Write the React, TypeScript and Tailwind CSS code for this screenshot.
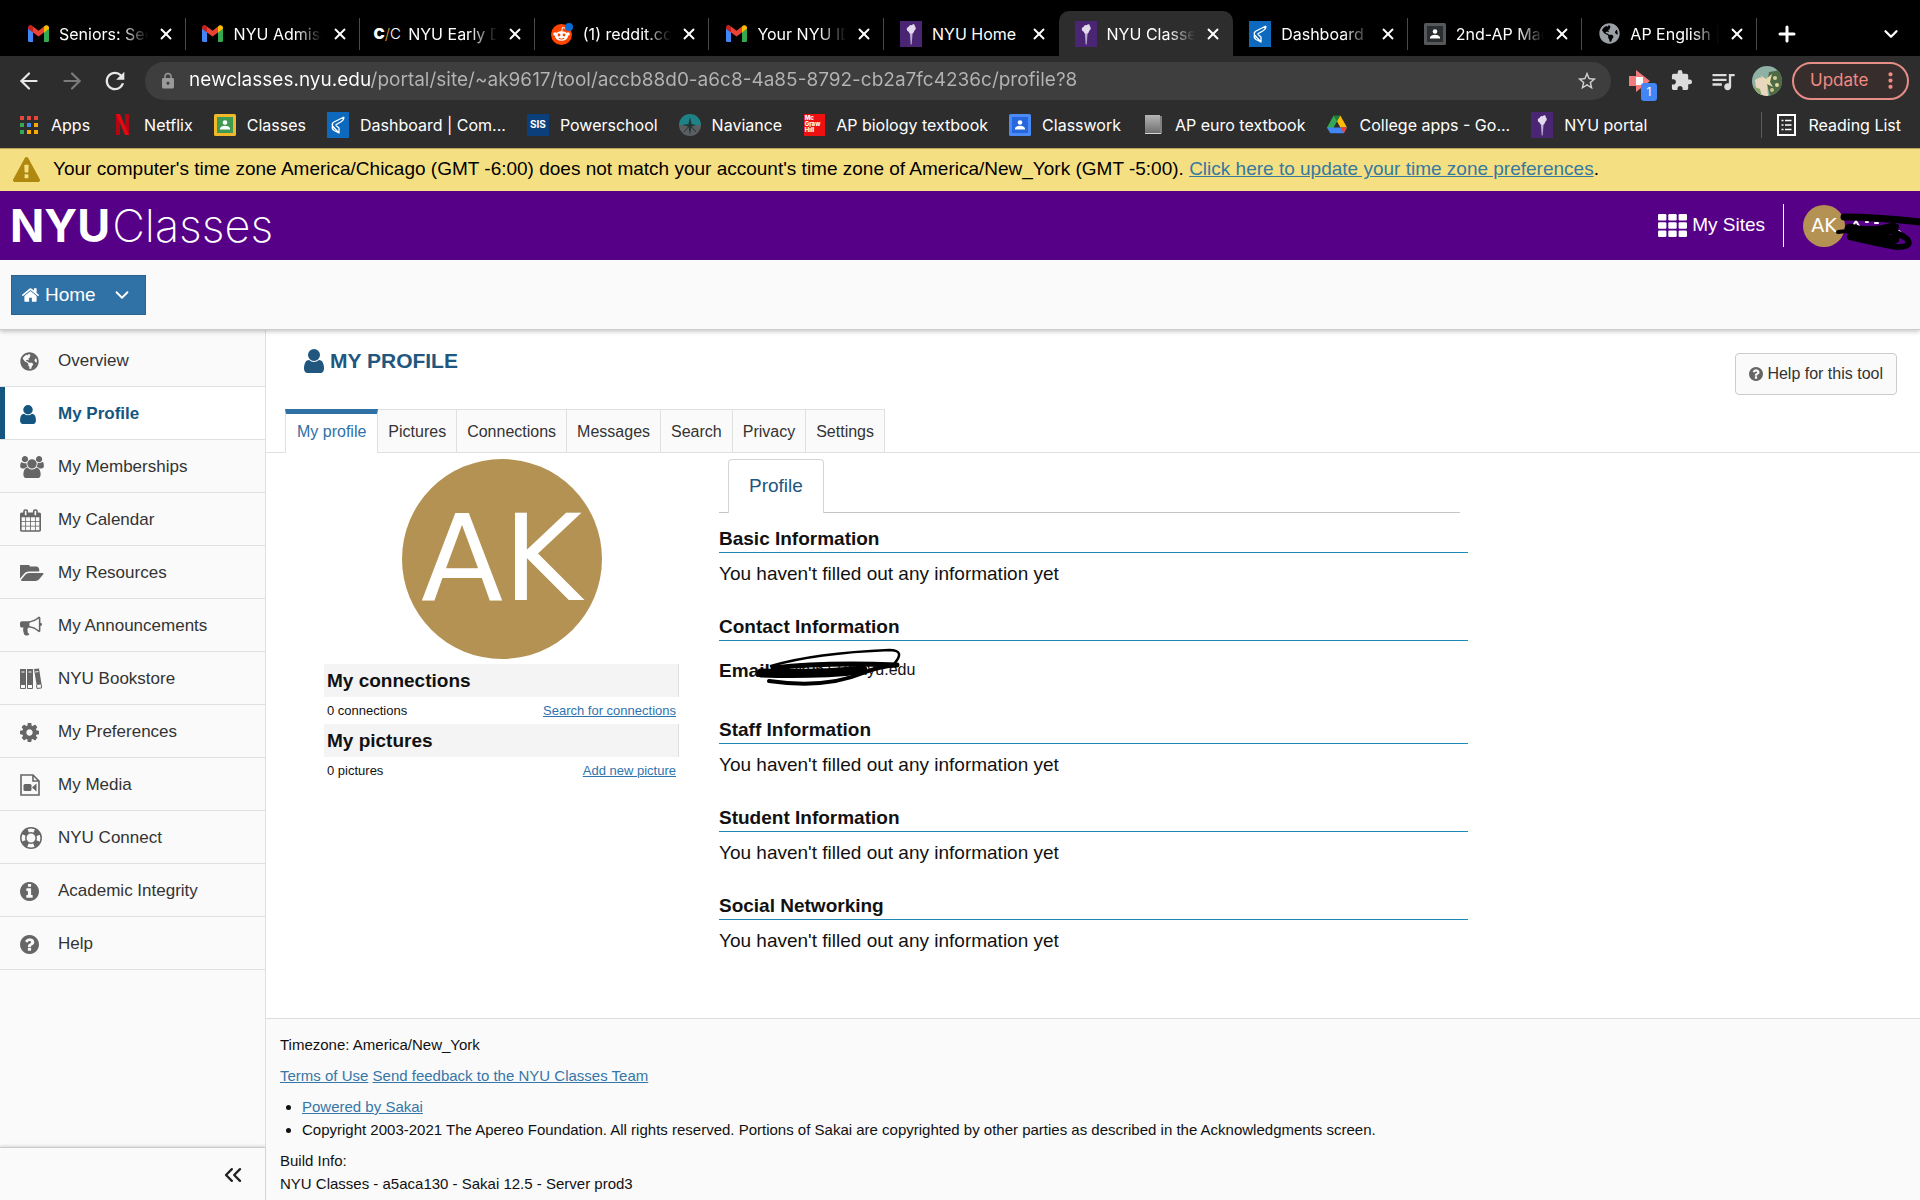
// src/App.tsx
import React from 'react';
import { ArrowLeft, ArrowRight, ChevronDown, ChevronsLeft, Plus, X } from 'lucide-react';
import { FaGlobeAmericas } from 'react-icons/fa';
import { MdExtension, MdLock, MdMoreVert, MdQueueMusic, MdRefresh, MdStarBorder } from 'react-icons/md';

interface IconProps {
  className?: string;
}

const DISC =
  'm640 -480q0 209-103 385.5t-279.5 279.5-385.5 103-385.5-103-279.5-279.5-103-385.5 103-385.5 279.5-279.5 385.5-103 385.5 103 279.5 279.5 103 385.5z';

const glyphs = {
  user: 'M1536 1399q0 109-62.5 187t-150.5 78h-854q-88 0-150.5-78t-62.5-187q0-85 8.5-160.5t31.5-152 58.5-131 94-89 134.5-34.5q131 128 313 128t313-128q76 0 134.5 34.5t94 89 58.5 131 31.5 152 8.5 160.5zm-256-887q0 159-112.5 271.5t-271.5 112.5-271.5-112.5-112.5-271.5 112.5-271.5 271.5-112.5 271.5 112.5 112.5 271.5z',
  users: 'M593 896q-162 5-265 128h-134q-82 0-138-40.5t-56-118.5q0-353 124-353 6 0 43.5 21t97.5 42.5 119 21.5q67 0 133-23-5 37-5 66 0 159 90 287zm1071 637q0 120-73 189.5t-194 69.5h-874q-121 0-194-69.5t-73-189.5q0-53 3.5-103.5t14-109 26.5-108.5 43-97.5 62-81 85.5-53.5 111.5-20q10 0 43 21.5t73 48 107 48 135 21.5 135-21.5 107-48 73-48 43-21.5q61 0 111.5 20t85.5 53.5 62 81 43 97.5 26.5 108.5 14 109 3.5 103.5zm-1024-1277q0 106-75 181t-181 75-181-75-75-181 75-181 181-75 181 75 75 181zm704 384q0 159-112.5 271.5t-271.5 112.5-271.5-112.5-112.5-271.5 112.5-271.5 271.5-112.5 271.5 112.5 112.5 271.5zm576 225q0 78-56 118.5t-138 40.5h-134q-103-123-265-128 90-128 90-287 0-29-5-66 66 23 133 23 59 0 119-21.5t97.5-42.5 43.5-21q124 0 124 353zm-128-609q0 106-75 181t-181 75-181-75-75-181 75-181 181-75 181 75 75 181z',
  calendar: 'M192 1664h288v-288h-288v288zm352 0h320v-288h-320v288zm-352-352h288v-320h-288v320zm352 0h320v-320h-320v320zm-352-384h288v-288h-288v288zm736 736h320v-288h-320v288zm-384-736h320v-288h-320v288zm768 736h288v-288h-288v288zm-384-352h320v-320h-320v320zm-352-864v-288q0-13-9.5-22.5t-22.5-9.5h-64q-13 0-22.5 9.5t-9.5 22.5v288q0 13 9.5 22.5t22.5 9.5h64q13 0 22.5-9.5t9.5-22.5zm736 864h288v-320h-288v320zm-384-384h320v-288h-320v288zm384 0h288v-288h-288v288zm32-480v-288q0-13-9.5-22.5t-22.5-9.5h-64q-13 0-22.5 9.5t-9.5 22.5v288q0 13 9.5 22.5t22.5 9.5h64q13 0 22.5-9.5t9.5-22.5zm384-64v1280q0 52-38 90t-90 38h-1408q-52 0-90-38t-38-90v-1280q0-52 38-90t90-38h128v-96q0-66 47-113t113-47h64q66 0 113 47t47 113v96h384v-96q0-66 47-113t113-47h64q66 0 113 47t47 113v96h128q52 0 90 38t38 90z',
  folder: 'M1879 952q0 31-31 66l-336 396q-43 51-120.5 86.5t-143.5 35.5h-1088q-34 0-60.5-13t-26.5-43q0-31 31-66l336-396q43-51 120.5-86.5t143.5-35.5h1088q34 0 60.5 13t26.5 43zm-343-344v160h-832q-94 0-197 47.5t-164 119.5l-337 396-5 6q0-4-.5-12.5t-.5-12.5v-960q0-92 66-158t158-66h320q92 0 158 66t66 158v32h544q92 0 158 66t66 158z',
  bullhorn: 'M1664 640q53 0 90.5 37.5t37.5 90.5-37.5 90.5-90.5 37.5v384q0 52-38 90t-90 38q-417-347-812-380-58 19-91 66t-31 100.5 40 92.5q-20 33-23 65.5t6 58 33.5 55 48 50 61.5 50.5q-29 58-111.5 83t-168.5 11.5-132-55.5q-7-23-29.5-87.5t-32-94.5-23-89-15-101 3.5-98.5 22-110.5h-122q-66 0-113-47t-47-113v-192q0-66 47-113t113-47h480q435 0 896-384 52 0 90 38t38 90v384zm-128 604v-954q-394 302-768 343v270q377 42 768 341z',
  cog: 'M1152 896q0-106-75-181t-181-75-181 75-75 181 75 181 181 75 181-75 75-181zm512-109v222q0 12-8 23t-20 13l-185 28q-19 54-39 91 35 50 107 138 10 12 10 25t-9 23q-27 37-99 108t-94 71q-12 0-26-9l-138-108q-44 23-91 38-16 136-29 186-7 28-36 28h-222q-14 0-24.5-8.5t-11.5-21.5l-28-184q-49-16-90-37l-141 107q-10 9-25 9-14 0-25-11-126-114-165-168-7-10-7-23 0-12 8-23 15-21 51-66.5t54-70.5q-27-50-41-99l-183-27q-13-2-21-12.5t-8-23.5v-222q0-12 8-23t19-13l186-28q14-46 39-92-40-57-107-138-10-12-10-24 0-10 9-23 26-36 98.5-107.5t94.5-71.5q13 0 26 10l138 107q44-23 91-38 16-136 29-186 7-28 36-28h222q14 0 24.5 8.5t11.5 21.5l28 184q49 16 90 37l142-107q9-9 24-9 13 0 25 10 129 119 165 170 7 8 7 22 0 12-8 23-15 21-51 66.5t-54 70.5q26 50 41 98l183 28q13 2 21 12.5t8 23.5z',
  info: 'M1152 1376v-160q0-14-9-23t-23-9h-96v-512q0-14-9-23t-23-9h-320q-14 0-23 9t-9 23v160q0 14 9 23t23 9h96v320h-96q-14 0-23 9t-9 23v160q0 14 9 23t23 9h448q14 0 23-9t9-23zm-128-896v-160q0-14-9-23t-23-9h-192q-14 0-23 9t-9 23v160q0 14 9 23t23 9h192q14 0 23-9t9-23zm640 416q0 209-103 385.5t-279.5 279.5-385.5 103-385.5-103-279.5-279.5-103-385.5 103-385.5 279.5-279.5 385.5-103 385.5 103 279.5 279.5 103 385.5z',
  question: 'M1024 1376v-192q0-14-9-23t-23-9h-192q-14 0-23 9t-9 23v192q0 14 9 23t23 9h192q14 0 23-9t9-23z' + DISC + 'M1280 704q0-88-55.5-163t-138.5-116-170-41q-243 0-371 213-15 24 8 42l132 100q7 6 19 6 16 0 25-12 53-68 86-92 34-24 86-24 48 0 85.5 26t37.5 59q0 38-20 61t-68 45q-63 28-115.5 86.5t-52.5 125.5v36q0 14 9 23t23 9h192q14 0 23-9t9-23q0-19 21.5-49.5t54.5-49.5q32-18 49-28.5t46-35 44.5-48 28-60.5 12.5-81z',
  home: 'M1472 992v480q0 26-19 45t-45 19h-384v-384h-256v384h-384q-26 0-45-19t-19-45v-480q0-1 .5-3t.5-3l575-474 575 474q1 2 1 6zm223-69l-62 74q-8 9-21 11h-3q-13 0-21-7l-692-577-692 577q-12 8-24 7-13-2-21-11l-62-74q-8-10-7-23.5t11-21.5l719-599q32-26 76-26t76 26l244 204v-195q0-14 9-23t23-9h192q14 0 23 9t9 23v408l219 182q10 8 11 21.5t-7 23.5z',
  warning: 'M1024 1375v-190q0-14-9.5-23.5t-22.5-9.5h-192q-13 0-22.5 9.5t-9.5 23.5v190q0 14 9.5 23.5t22.5 9.5h192q13 0 22.5-9.5t9.5-23.5zm-2-374l18-459q0-12-10-19-13-11-24-11h-220q-11 0-24 11-10 7-10 21l17 457q0 10 10 16.5t24 6.5h185q14 0 23.5-6.5t10.5-16.5zm-14-934l768 1408q35 63-2 126-17 29-46.5 46t-63.5 17h-1536q-34 0-63.5-17t-46.5-46q-37-63-2-126l768-1408q17-31 47-49t65-18 65 18 47 49z',
};

function Glyph({ name, className = '', box = '0 0 1792 1792' }: { name: keyof typeof glyphs; className?: string; box?: string }) {
  return (
    <svg viewBox={box} className={className} fill="currentColor" fillRule="evenodd" aria-hidden="true">
      <path d={glyphs[name]} />
    </svg>
  );
}

function BooksIcon({ className }: IconProps) {
  return (
    <svg viewBox="0 0 22 22" className={className} fill="currentColor" aria-hidden="true">
      <path d="M0 1h6v16H0zM7 1h6v16H7zM14 1l5-.6 2.6 16-5 .6z" />
      <path d="M.5 17v3.500h5V17M7.500 17v3.500h5V17M16.500 17l.5 3.500 4.700-.6-.5-3.500" fill="none" stroke="currentColor" strokeWidth="1" />
      <path d="M1.500 4h3M8.500 4h3M15.200 4l3.200-.4" stroke="#fafafa" strokeWidth="1" />
    </svg>
  );
}

function FileVideoIcon({ className }: IconProps) {
  return (
    <svg viewBox="0 0 20 22" className={className} aria-hidden="true">
      <path d="M1 1h12l6 6v14H1zM13 1v6h6" fill="none" stroke="currentColor" strokeWidth="1.600" />
      <rect x="3.500" y="10" width="8" height="7" rx="1.500" fill="currentColor" />
      <path d="M12 13.500l4.500-4v8z" fill="currentColor" />
    </svg>
  );
}

function LifeRingIcon({ className }: IconProps) {
  return (
    <svg viewBox="0 0 22 22" className={className} fill="none" stroke="currentColor" aria-hidden="true">
      <circle cx="11" cy="11" r="10.200" strokeWidth="1.500" />
      <circle cx="11" cy="11" r="5.200" strokeWidth="1.500" />
      <circle cx="11" cy="11" r="7.700" strokeWidth="5" strokeDasharray="6.100 6" strokeDashoffset="-3" />
    </svg>
  );
}

// ---- favicons ----

function Gmail({ className = 'h-[17px] w-[21px]' }: IconProps) {
  return (
    <svg viewBox="0 0 21 17" className={className} aria-hidden="true">
      <path d="M0 3v12.500A1.500 1.500 0 0 0 1.500 17H5V7z" fill="#4285f4" />
      <path d="M21 3v12.500a1.500 1.500 0 0 1-1.500 1.500H16V7z" fill="#34a853" />
      <path d="M16 1.500V7.500l5-3.800V2.500c0-2-2.200-3-3.800-1.900z" fill="#fbbc04" />
      <path d="M0 3.700l5 3.800V1.500L3.800.6C2.200-.6 0 .5 0 2.500z" fill="#c5221f" />
      <path d="M5 1.500l5.500 4.200L16 1.500v6l-5.500 4.100L5 7.500z" fill="#ea4335" />
    </svg>
  );
}

function CollegeConfidential() {
  return (
    <span className="flex w-[22px] justify-center text-[15px] font-black leading-none text-white">
      C<span className="font-light text-[#e0a83a]">/</span><span className="font-light">C</span>
    </span>
  );
}

function Reddit() {
  return (
    <svg viewBox="0 0 22 22" className="h-[22px] w-[22px]" aria-hidden="true">
      <circle cx="10.500" cy="11.500" r="10.500" fill="#ff4500" />
      <ellipse cx="10.500" cy="13" rx="6.500" ry="4.800" fill="#fff" />
      <circle cx="4" cy="11" r="1.800" fill="#fff" />
      <circle cx="17" cy="11" r="1.800" fill="#fff" />
      <path d="M10.500 9l1-4.500 3.500.8" stroke="#fff" fill="none" />
      <circle cx="8" cy="12" r="1.400" fill="#ff4500" />
      <circle cx="13" cy="12" r="1.400" fill="#ff4500" />
      <path d="M7.800 15.300q2.700 1.700 5.400 0" stroke="#ff4500" fill="none" />
      <circle cx="18" cy="4" r="4" fill="#0a6cd6" />
    </svg>
  );
}

function Torch() {
  return (
    <svg viewBox="0 0 22 26" preserveAspectRatio="none" className="h-[26px] w-[22px]" aria-hidden="true">
      <rect width="22" height="26" fill="#4a2573" />
      <path d="M9.800 12h2.800l-.9 11.500h-1z" fill="#b9a8cf" />
      <path d="M7 9q-.8-2.500 1.500-3 1-2.500 3.200-1.800Q13 2.500 14.500 3.500q-.2 1.500 1 2.500 1 2-1 3.500-.5 2.500-3 3.500-2.500-.5-3-2.500Q7 10 7 9z" fill="#e3daee" />
    </svg>
  );
}

function CommonApp() {
  return (
    <svg viewBox="0 0 22 26" className="h-[26px] w-[22px]" aria-hidden="true">
      <rect width="22" height="26" fill="#0c69bd" />
      <path
        d="M17 5L7 10q-2.500 1.500-1.500 4L12 21v-5l-3.500-3M17 5q0 3-2.500 4.500l-6 3.500M5.500 14q-1 3 1.500 4.500l5 2.500"
        fill="none"
        stroke="#fff"
        strokeWidth="1.300"
        strokeLinejoin="round"
      />
    </svg>
  );
}

function Classroom({ frame, board }: { frame: string; board: string }) {
  return (
    <svg viewBox="0 0 22 22" className="h-[22px] w-[22px]" aria-hidden="true">
      <rect width="22" height="22" rx="1.500" fill={frame} />
      <rect x="3" y="3" width="16" height="16" fill={board} />
      <circle cx="11" cy="8.500" r="2.300" fill="#fff" />
      <path d="M6 15.500v-1.500q1.500-2.300 5-2.300t5 2.300v1.500z" fill="#fff" />
    </svg>
  );
}

function AppsGrid() {
  const fills = ['#e8453c', '#e8453c', '#e8453c', '#34a853', '#4285f4', '#f9ab00', '#34a853', '#f9ab00', '#f9ab00'];
  return (
    <svg viewBox="0 0 18 18" className="h-[18px] w-[18px]" aria-hidden="true">
      {fills.map((fill, i) => (
        <rect key={i} x={(i % 3) * 7} y={Math.floor(i / 3) * 7} width="4" height="4" fill={fill} />
      ))}
    </svg>
  );
}

function Netflix() {
  return (
    <svg viewBox="0 0 13 21" className="h-[21px] w-[13px]" aria-hidden="true">
      <path d="M0 0h4v21H0zM9 0h4v21H9z" fill="#b20710" />
      <path d="M0 0h4l9 21H9z" fill="#e50914" />
    </svg>
  );
}

function Sis() {
  return (
    <span className="flex h-[22px] w-[22px] items-center justify-center bg-[#0a3f7c] text-[10px] font-bold text-white">SIS</span>
  );
}

function Naviance() {
  return (
    <svg viewBox="0 0 22 22" className="h-[22px] w-[22px]" aria-hidden="true">
      <path d="M0 11a11 11 0 0 1 22 0z" fill="#1f8286" />
      <path d="M0 11a11 11 0 0 0 22 0z" fill="#5b5f62" />
      <path d="M11 3l1.600 7L17 11l-4.400 1.600L11 21l-1.600-8.400L3 11l6.400-1z" fill="#22383a" />
      <path d="M11 11L5 18M11 11l6 7" stroke="#2c2c2c" />
    </svg>
  );
}

function McGraw() {
  return (
    <span className="flex h-[22px] w-[21px] flex-col bg-[#ee1111] pl-px pt-px text-[6px] font-extrabold leading-[6px] text-white">
      <span>Mc</span>
      <span>Graw</span>
      <span>Hill</span>
    </span>
  );
}

function Book() {
  return (
    <svg viewBox="0 0 18 20" className="h-5 w-[18px]" aria-hidden="true">
      <defs>
        <linearGradient id="cover" x1="0" y1="0" x2="0" y2="1">
          <stop offset="0" stopColor="#b5b5b5" />
          <stop offset="1" stopColor="#6f6f6f" />
        </linearGradient>
      </defs>
      <rect x="1" width="15" height="18" fill="url(#cover)" />
      <path d="M1 18.500h16V1" stroke="#d5d5d5" fill="none" />
    </svg>
  );
}

function Drive() {
  return (
    <svg viewBox="0 0 87 78" className="h-[19px] w-5" aria-hidden="true">
      <path d="M29 0h29L44 25z" fill="#188038" />
      <path d="M29 0l15 25L15 77 0 52z" fill="#34a853" />
      <path d="M58 0l29 52H58L43.500 25z" fill="#fbbc04" />
      <path d="M0 52h87L73 77H15z" fill="#4285f4" />
      <path d="M58 52h29L73 77z" fill="#ea4335" />
    </svg>
  );
}

const browserTabs = [
  { title: 'Seniors: See', icon: <Gmail />, fade: true },
  { title: 'NYU Admiss', icon: <Gmail />, fade: true },
  { title: 'NYU Early D', icon: <CollegeConfidential />, fade: true },
  { title: '(1) reddit.co', icon: <Reddit />, fade: true },
  { title: 'Your NYU ID', icon: <Gmail />, fade: true },
  { title: 'NYU Home', icon: <Torch /> },
  { title: 'NYU Classe', icon: <Torch />, fade: true, active: true },
  { title: 'Dashboard |', icon: <CommonApp />, fade: true },
  { title: '2nd-AP Mac', icon: <Classroom frame="#55585b" board="#2b2d2f" />, fade: true },
  { title: 'AP English |', icon: <FaGlobeAmericas className="h-[21px] w-[21px] text-[#9aa0a6]" />, fade: true },
];

const bookmarks = [
  { label: 'Apps', icon: <AppsGrid /> },
  { label: 'Netflix', icon: <Netflix /> },
  { label: 'Classes', icon: <Classroom frame="#f0b92b" board="#3f9a52" /> },
  { label: 'Dashboard | Com...', icon: <CommonApp /> },
  { label: 'Powerschool', icon: <Sis /> },
  { label: 'Naviance', icon: <Naviance /> },
  { label: 'AP biology textbook', icon: <McGraw /> },
  { label: 'Classwork', icon: <Classroom frame="#4c8bf5" board="#2667dd" /> },
  { label: 'AP euro textbook', icon: <Book /> },
  { label: 'College apps - Go...', icon: <Drive /> },
  { label: 'NYU portal', icon: <Torch /> },
];

const menu = [
  { label: 'Overview', icon: <FaGlobeAmericas className="h-[19px] w-[19px]" /> },
  { label: 'My Profile', icon: <Glyph name="user" box="256 128 1280 1536" className="h-[19px] w-4" />, active: true },
  { label: 'My Memberships', icon: <Glyph name="users" box="0 0 1920 1792" className="h-[22px] w-6" /> },
  { label: 'My Calendar', icon: <Glyph name="calendar" box="64 0 1664 1792" className="h-[23px] w-[21px]" /> },
  { label: 'My Resources', icon: <Glyph name="folder" box="0 256 1920 1280" className="h-4 w-6" /> },
  { label: 'My Announcements', icon: <Glyph name="bullhorn" className="h-[22px] w-[22px]" /> },
  { label: 'NYU Bookstore', icon: <BooksIcon className="h-[22px] w-[22px]" /> },
  { label: 'My Preferences', icon: <Glyph name="cog" box="128 128 1536 1536" className="h-[19px] w-[19px]" /> },
  { label: 'My Media', icon: <FileVideoIcon className="h-[22px] w-5" /> },
  { label: 'NYU Connect', icon: <LifeRingIcon className="h-[22px] w-[22px]" /> },
  { label: 'Academic Integrity', icon: <Glyph name="info" box="128 128 1536 1536" className="h-[19px] w-[19px]" /> },
  { label: 'Help', icon: <Glyph name="question" box="128 128 1536 1536" className="h-[19px] w-[19px]" /> },
];

const toolTabs = ['My profile', 'Pictures', 'Connections', 'Messages', 'Search', 'Privacy', 'Settings'];

function TabStrip() {
  return (
    <div className="flex h-14 items-end bg-black pl-[11px]">
      <div className="flex min-w-0 flex-1">
        {browserTabs.map((tab, i) => {
          const divided = !tab.active && !browserTabs[i + 1]?.active;
          return (
            <div
              key={i}
              className={`flex h-[45px] min-w-0 flex-1 items-center rounded-t-[10px] pl-4 ${tab.active ? 'bg-[#2d2d2d]' : ''}`}
            >
              <span className="flex w-[22px] shrink-0 justify-center">{tab.icon}</span>
              <span
                className={`ml-[10px] min-w-0 flex-1 whitespace-nowrap ${
                  tab.fade ? '[mask-image:linear-gradient(to_right,black_70%,transparent)]' : ''
                }`}
              >
                {tab.title}
              </span>
              <button aria-label="Close tab" className="ml-2 flex h-5 w-5 items-center justify-center">
                <X className="h-[18px] w-[18px]" strokeWidth={2.5} />
              </button>
              <span className={`ml-[9px] h-8 w-px ${divided ? 'bg-[#4a4a4a]' : ''}`} />
            </div>
          );
        })}
      </div>
      <div className="flex h-[45px] w-[163px] shrink-0 items-center justify-between pl-[18px] pr-[18px]">
        <button aria-label="New tab">
          <Plus className="h-6 w-6" strokeWidth={3} />
        </button>
        <button aria-label="Search tabs">
          <ChevronDown className="h-[22px] w-[22px]" strokeWidth={2.5} />
        </button>
      </div>
    </div>
  );
}

function Toolbar() {
  return (
    <div className="flex h-12 items-center bg-[#2d2d2d] pl-4 pr-[11px] pt-px">
      <button aria-label="Back">
        <ArrowLeft className="h-[26px] w-[26px] text-[#e8e8e8]" />
      </button>
      <button aria-label="Forward" className="ml-[17px]">
        <ArrowRight className="h-[26px] w-[26px] text-[#7c7c7c]" />
      </button>
      <button aria-label="Reload" className="ml-4">
        <MdRefresh className="h-7 w-7 text-[#e8e8e8]" />
      </button>
      <div className="ml-4 flex h-[38px] min-w-0 flex-1 items-center rounded-full bg-[#3e3e3e] pl-[14px] pr-[13px]">
        <MdLock className="h-[18px] w-[18px] shrink-0 text-[#9a9a9a]" />
        <input
          aria-label="Address"
          className="ml-3 min-w-0 flex-1 bg-[linear-gradient(to_right,#ffffff_182px,#b4b4b4_182px)] bg-clip-text text-[19px] text-transparent outline-none"
          defaultValue="newclasses.nyu.edu/portal/site/~ak9617/tool/accb88d0-a6c8-4a85-8792-cb2a7fc4236c/profile?8"
        />
        <MdStarBorder className="h-[22px] w-[22px] shrink-0 text-[#d0d0d0]" />
      </div>
      <button aria-label="Extension" className="relative ml-[17px] h-[26px] w-[26px]">
        <svg viewBox="0 0 26 26" aria-hidden="true">
          <path d="M1 8h7V2l14 11-14 11v-6H1z" fill="#f47c7c" />
          <path d="M8 9h7v8H8z" fill="#fff" />
        </svg>
        <span className="absolute left-[13px] top-[15px] flex h-[18px] w-4 items-center justify-center rounded-[3px] bg-[#4285f4] text-[12px]">1</span>
      </button>
      <button aria-label="Extensions" className="ml-4">
        <MdExtension className="h-[23px] w-[23px] text-[#dcdcdc]" />
      </button>
      <button aria-label="Media" className="ml-4">
        <MdQueueMusic className="h-[28px] w-[28px] text-[#dcdcdc]" />
      </button>
      <button aria-label="Account" className="ml-[15px] h-[30px] w-[30px] overflow-hidden rounded-full">
        <svg viewBox="0 0 30 30" aria-hidden="true">
          <rect width="30" height="30" fill="#8fb0a4" />
          <path d="M17 6l13-2v26H18l-3-12z" fill="#4d6a45" />
          <path d="M3 14q7-6 12 2l1 14H5z" fill="#e8d6bd" />
          <path d="M8 9l6 4 6-5-2 8 3 5-6-3z" fill="#e9ddb0" />
          <path d="M0 20l8 3 2 7H0z" fill="#86a86f" />
          <circle cx="23" cy="12" r="2" fill="#d9cf9a" />
          <circle cx="25" cy="19" r="2" fill="#e6d9a4" />
          <circle cx="20" cy="24" r="2" fill="#c9c48a" />
        </svg>
      </button>
      <button className="ml-[10px] flex h-[38px] w-[117px] items-center justify-between rounded-full border-2 border-[#e78d88] bg-[#382d2d] pl-4 pr-1 text-[17px] text-[#f28b82]">
        Update
        <MdMoreVert className="h-[25px] w-[25px]" />
      </button>
    </div>
  );
}

function BookmarksBar() {
  return (
    <nav className="flex h-11 items-center bg-[#2d2d2d] pb-[3px] pl-[18px] pr-[19px]">
      <div className="flex min-w-0 flex-1 items-center gap-[21px] whitespace-nowrap">
        {bookmarks.map((item) => (
          <a key={item.label} href="#" className="flex items-center gap-[11px]">
            <span className="flex w-[22px] justify-center">{item.icon}</span>
            {item.label}
          </a>
        ))}
      </div>
      <span className="h-[26px] w-px bg-[#5a5a5a]" />
      <button className="ml-[15px] flex items-center gap-3">
        <svg viewBox="0 0 19 22" className="h-[22px] w-[19px]" fill="none" stroke="#fff" strokeWidth="2" aria-hidden="true">
          <rect x="1" y="1" width="17" height="20" />
          <path d="M4.500 6.500h2M8 6.500h6.500M4.500 11h2M8 11h6.500M4.500 15.500h2M8 15.500h6.500" strokeWidth="1.500" />
        </svg>
        Reading List
      </button>
    </nav>
  );
}

function TimezoneBanner() {
  return (
    <div className="flex h-[43px] items-center border-t border-[#b8a45c] bg-[#f5df83] pl-[13px] text-[19px] text-black">
      <Glyph name="warning" className="h-[27px] w-[27px] text-[#b08810]" />
      <p className="ml-[13px] whitespace-nowrap pb-px">
        Your computer's time zone America/Chicago (GMT -6:00) does not match your account's time zone of America/New_York (GMT -5:00).{' '}
        <a href="#" className="text-[#35799f] underline">Click here to update your time zone preferences</a>.
      </p>
    </div>
  );
}

function SiteHeader() {
  return (
    <header className="flex h-[69px] items-center justify-between bg-[#560088] pl-[10px] text-white">
      <a href="#" className="whitespace-nowrap pb-px font-[Inter,sans-serif] text-[45px] font-bold leading-none">
        NYU<span className="ml-[2px] font-extralight">Classes</span>
      </a>
      <div className="flex items-center">
        <button className="flex items-center gap-[5px] text-[19px]">
          <svg viewBox="0 0 29 23" className="h-[23px] w-[29px]" fill="#fff" aria-hidden="true">
            {[0, 1, 2].map((row) =>
              [0, 1, 2].map((col) => <rect key={`${row}${col}`} x={col * 10.300} y={row * 8.300} width="8.400" height="6.400" rx="1.200" />)
            )}
          </svg>
          My Sites
        </button>
        <span className="ml-[18px] h-[43px] w-px bg-white" />
        <button aria-label="Account menu" className="relative ml-[19px] flex w-[117px] items-center">
          <span className="flex h-[42px] w-[42px] items-center justify-center rounded-full bg-[#b49253] font-['DejaVu_Sans',sans-serif] text-[19px]">
            AK
          </span>
          <svg viewBox="0 0 85 46" className="absolute left-8 top-0 h-[46px] w-[85px]" fill="none" stroke="#000" strokeLinecap="round" aria-hidden="true">
            <path d="M18 21l3-5 3 5M31 17h2M40 18h3M64 26l2 2" stroke="#fff" strokeWidth="2" />
            <path d="M9 12Q40 12 85 17" strokeWidth="7" />
            <path d="M3 27Q30 24 62 21" strokeWidth="4" />
            <path d="M15 24Q35 30 58 23" strokeWidth="11" />
            <path d="M15 32Q40 38 62 42Q78 42 72 34Q62 26 48 25" strokeWidth="6" />
            <path d="M25 31Q45 36 60 34" strokeWidth="9" />
          </svg>
        </button>
      </div>
    </header>
  );
}

function Sidebar() {
  return (
    <aside className="flex w-[266px] shrink-0 flex-col border-r border-[#e0e0e0] bg-[#fafafa]">
      <ul className="flex-1 pt-1 text-[17px] text-[#333]">
        {menu.map((item) => (
          <li key={item.label} className="h-[53px] border-b border-[#e0e0e0]">
            <a
              href="#"
              className={`flex h-full items-center pr-2 pt-[2px] ${
                item.active ? 'border-l-[5px] border-[#14567f] bg-white pl-[15px] font-bold text-[#14567f]' : 'pl-5'
              }`}
            >
              <span className={`w-[38px] ${item.active ? '' : 'text-[#666]'}`}>{item.icon}</span>
              {item.label}
            </a>
          </li>
        ))}
      </ul>
      <div className="flex h-[54px] items-center justify-end border-t border-[#ccc] pr-[18px] shadow-[0_-1px_3px_rgba(0,0,0,0.15)]">
        <button aria-label="Collapse menu">
          <ChevronsLeft className="h-7 w-7 text-[#222]" />
        </button>
      </div>
    </aside>
  );
}

function ProfileTile({ title, count, action }: { title: string; count: string; action: string }) {
  return (
    <section>
      <h3 className="flex h-[33px] items-center border-r border-[#ddd] bg-[#f4f4f4] pl-[3px] pt-px text-[19px] font-bold">{title}</h3>
      <p className="flex h-[27px] items-center justify-between px-[3px] text-[13px]">
        {count}
        <a href="#" className="text-[#2f74ad] underline">{action}</a>
      </p>
    </section>
  );
}

function InfoSection({ title, children }: { title: string; children?: React.ReactNode }) {
  return (
    <section>
      <h3 className="border-b border-[#1a87b5] text-[19px] font-bold leading-[27px]">{title}</h3>
      {children ?? <p className="pb-[18px] leading-[42px]">You haven't filled out any information yet</p>}
    </section>
  );
}

function ProfilePage() {
  return (
    <main className="flex-1">
      <div className="flex justify-between pl-[38px] pr-[23px] pt-[18px]">
        <h2 className="flex h-[25px] items-center gap-[6px] text-[21px] font-bold text-[#21567e]">
          <Glyph name="user" box="256 128 1280 1536" className="h-6 w-5" />
          MY PROFILE
        </h2>
        <button className="mt-[5px] flex h-[42px] items-center gap-1 rounded-[4px] border border-[#ccc] bg-[#fafafa] px-[13px] text-[16px] text-[#333]">
          <Glyph name="question" box="128 128 1536 1536" className="h-[14px] w-[14px] text-[#666]" />
          Help for this tool
        </button>
      </div>

      <ul className="mt-[14px] flex border-b border-[#e0e0e0] pl-[19px] text-[16px]">
        {toolTabs.map((tab, i) => (
          <li key={tab} className="-mb-px">
            <a
              href="#"
              className={`flex h-11 items-center border-r border-[#e0e0e0] ${
                i === 0
                  ? 'border-l border-t-[5px] border-t-[#3172a6] bg-white px-[11px] pb-[3px] text-[#2f70a8]'
                  : 'border-b border-t bg-[#fafafa] px-[10px] pt-[2px] text-[#333]'
              }`}
            >
              {tab}
            </a>
          </li>
        ))}
      </ul>

      <div className="flex pb-[38px] pl-[58px] pt-[6px] text-[#111]">
        <div className="w-[355px] shrink-0">
          <div className="mx-auto flex h-[200px] w-[200px] items-center justify-center rounded-full bg-[#b49253] font-['DejaVu_Sans',sans-serif] text-[120px] leading-none text-white">
            AK
          </div>
          <div className="mt-[5px]">
            <ProfileTile title="My connections" count="0 connections" action="Search for connections" />
            <ProfileTile title="My pictures" count="0 pictures" action="Add new picture" />
          </div>
        </div>

        <div className="ml-[40px] w-[749px] text-[19px]">
          <div className="mr-2 flex border-b border-[#c4c4c4] pl-[9px]">
            <a
              href="#"
              className="-mb-px flex h-[54px] items-center rounded-t-[4px] border border-b-0 border-[#d5d5d5] bg-white px-[20px] text-[#21567e]"
            >
              Profile
            </a>
          </div>
          <div className="pt-3">
            <InfoSection title="Basic Information" />
            <InfoSection title="Contact Information">
              <p className="relative flex h-[75px] items-start pt-4">
                <b>Email</b>
                <span className="ml-5 pt-px text-[16px]">ak9617@nyu.edu</span>
                <svg viewBox="0 0 150 42" className="absolute left-[36px] top-1 h-[42px] w-[150px]" fill="none" stroke="#000" strokeLinecap="round" aria-hidden="true">
                  <path d="M16 21Q60 8 134 5Q152 5 138 20" strokeWidth="2.500" />
                  <path d="M18 23Q70 17 142 20" strokeWidth="5" />
                  <path d="M6 28Q60 30 108 25" strokeWidth="9" />
                  <path d="M14 36Q70 44 108 28Q122 22 142 20" strokeWidth="4" />
                </svg>
              </p>
            </InfoSection>
            <InfoSection title="Staff Information" />
            <InfoSection title="Student Information" />
            <InfoSection title="Social Networking" />
          </div>
        </div>
      </div>
    </main>
  );
}

function Footer() {
  return (
    <footer className="border-t border-[#ddd] bg-[#fafafa] pb-[6px] pl-[14px] pt-[14px] text-[15px] leading-[23px] text-[#111]">
      <p>Timezone: America/New_York</p>
      <p className="mt-2">
        <a href="#" className="text-[#3576a8] underline">Terms of Use</a>{' '}
        <a href="#" className="text-[#3576a8] underline">Send feedback to the NYU Classes Team</a>
      </p>
      <ul className="mt-2 list-disc pl-[22px]">
        <li>
          <a href="#" className="text-[#3576a8] underline">Powered by Sakai</a>
        </li>
        <li>Copyright 2003-2021 The Apereo Foundation. All rights reserved. Portions of Sakai are copyrighted by other parties as described in the Acknowledgments screen.</li>
      </ul>
      <p className="mt-2">Build Info:</p>
      <p>NYU Classes - a5aca130 - Sakai 12.5 - Server prod3</p>
    </footer>
  );
}

export default function App() {
  return (
    <div className="flex min-h-screen flex-col overflow-x-hidden bg-white font-['Liberation_Sans',Arial,sans-serif]">
      <div className="font-[Inter,sans-serif] text-[16px] text-white">
        <TabStrip />
        <Toolbar />
        <BookmarksBar />
      </div>
      <TimezoneBanner />
      <SiteHeader />
      <div className="relative flex h-[70px] items-center border-b border-[#ccc] bg-[#fafafa] pl-[11px] shadow-[0_2px_4px_rgba(0,0,0,0.2)]">
        <button className="flex h-10 w-[135px] items-center border border-[#2a6290] bg-[#3172a6] pl-[10px] text-[19px] text-white">
          <Glyph name="home" box="96 256 1600 1280" className="h-[14px] w-[17px]" />
          <span className="ml-[6px] pt-px">Home</span>
          <ChevronDown className="ml-[15px] h-[22px] w-[22px]" />
        </button>
      </div>
      <div className="flex flex-1">
        <Sidebar />
        <div className="flex min-w-0 flex-1 flex-col">
          <ProfilePage />
          <Footer />
        </div>
      </div>
    </div>
  );
}
